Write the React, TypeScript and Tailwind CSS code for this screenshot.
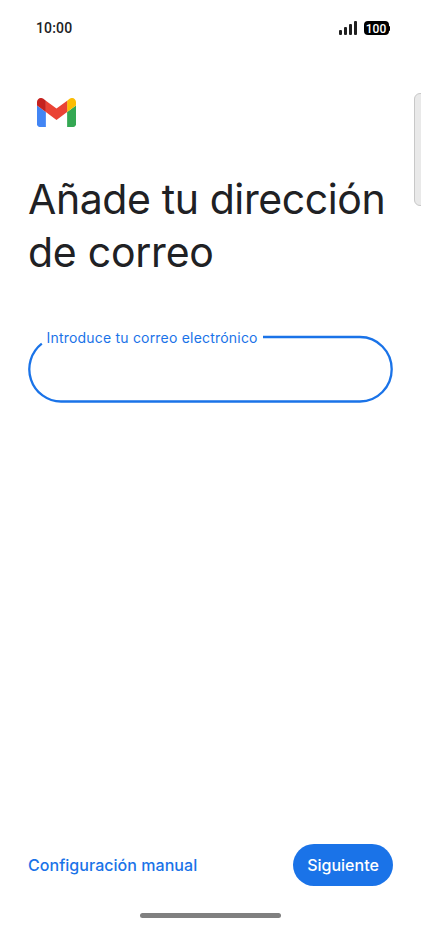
function StatusBar() {
  return (
    <header className="flex h-14 items-center justify-between pr-[31px] pl-9 font-['Roboto',sans-serif]">
      <span className="text-[14px] leading-4 font-medium tracking-[0.15px] text-[#202124]">10:00</span>
      <div className="flex items-center gap-[6.5px]">
        <div className="flex h-[14px] items-end gap-[2px]">
          <span className="h-[5px] w-[3px] rounded-[1px] bg-[#202020]" />
          <span className="h-[8px] w-[3px] rounded-[1px] bg-[#202020]" />
          <span className="h-[11px] w-[3px] rounded-[1px] bg-[#202020]" />
          <span className="h-[14px] w-[3px] rounded-[1px] bg-[#202020]" />
        </div>
        <div className="flex items-center">
          <span className="flex h-[14px] w-[25px] items-center justify-center rounded-[4px] bg-black pt-[2px] text-[12px] leading-none font-medium text-white">
            100
          </span>
          <span className="h-[5px] w-[1.5px] rounded-r bg-black" />
        </div>
      </div>
    </header>
  );
}

function GmailLogo() {
  return (
    <svg className="ml-[9px] block h-[29px] w-[39px]" viewBox="52 42 88 66" preserveAspectRatio="none" aria-label="Gmail">
      <path fill="#4285f4" d="M58 108h14V74L52 59v43c0 3.32 2.69 6 6 6" />
      <path fill="#34a853" d="M120 108h14c3.32 0 6-2.69 6-6V59l-20 15" />
      <path fill="#fbbc04" d="M120 48v26l20-15v-8c0-7.42-8.47-11.65-14.4-7.2" />
      <path fill="#ea4335" d="M72 74V48l24 18 24-18v26L96 92" />
      <path fill="#c5221f" d="M52 51v8l20 15V48l-5.6-4.2c-5.94-4.45-14.4-.22-14.4 7.2" />
    </svg>
  );
}

export default function App() {
  return (
    <div className="relative flex h-[926px] w-[421px] flex-col overflow-hidden bg-white font-['Inter',sans-serif]">
      <StatusBar />
      <main className="flex flex-1 flex-col px-7 pt-[42px]">
        <GmailLogo />
        <h1 className="mt-[46px] text-[41px] leading-[53px] font-normal whitespace-nowrap text-[#202124]">
          <span className="block tracking-[-0.4px]">Añade tu dirección</span>
          <span className="block tracking-[-0.25px]">de correo</span>
        </h1>
        <label className="relative mt-[56px] block h-[68px] w-[365px]">
          <svg className="block h-[68px] w-[365px]" viewBox="0 0 365 68" fill="none" stroke="#1a73e8" strokeWidth="2.3">
            <path d="M235 2H332A31.7 32.25 0 0 1 332 66.5H33A31.7 32.25 0 0 1 13.8 8.6" />
          </svg>
          <span className="absolute top-[-6px] left-[18.5px] text-[14px] leading-[18px] tracking-[0.2px] whitespace-nowrap text-[#1a73e8]">
            Introduce tu correo electrónico
          </span>
          <input aria-label="Introduce tu correo electrónico" className="absolute inset-x-5 inset-y-4 bg-transparent outline-none" />
        </label>
      </main>
      <footer className="flex h-[42px] items-center justify-between px-7 text-[16px] font-medium">
        <button className="tracking-[0.04px] whitespace-nowrap text-[#1a73e8]">Configuración manual</button>
        <button className="h-[42px] w-[100px] rounded-full bg-[#1a73e8] text-white">Siguiente</button>
      </footer>
      <div className="mt-[27px] mb-[8px] h-[5px] w-[141px] self-center rounded-full bg-[#808080]" />
      <div className="absolute top-[93px] right-[-8px] h-[113px] w-[15px] rounded-[6px] border border-[#c8c8c8] bg-[#e9e9e9]" />
    </div>
  );
}
